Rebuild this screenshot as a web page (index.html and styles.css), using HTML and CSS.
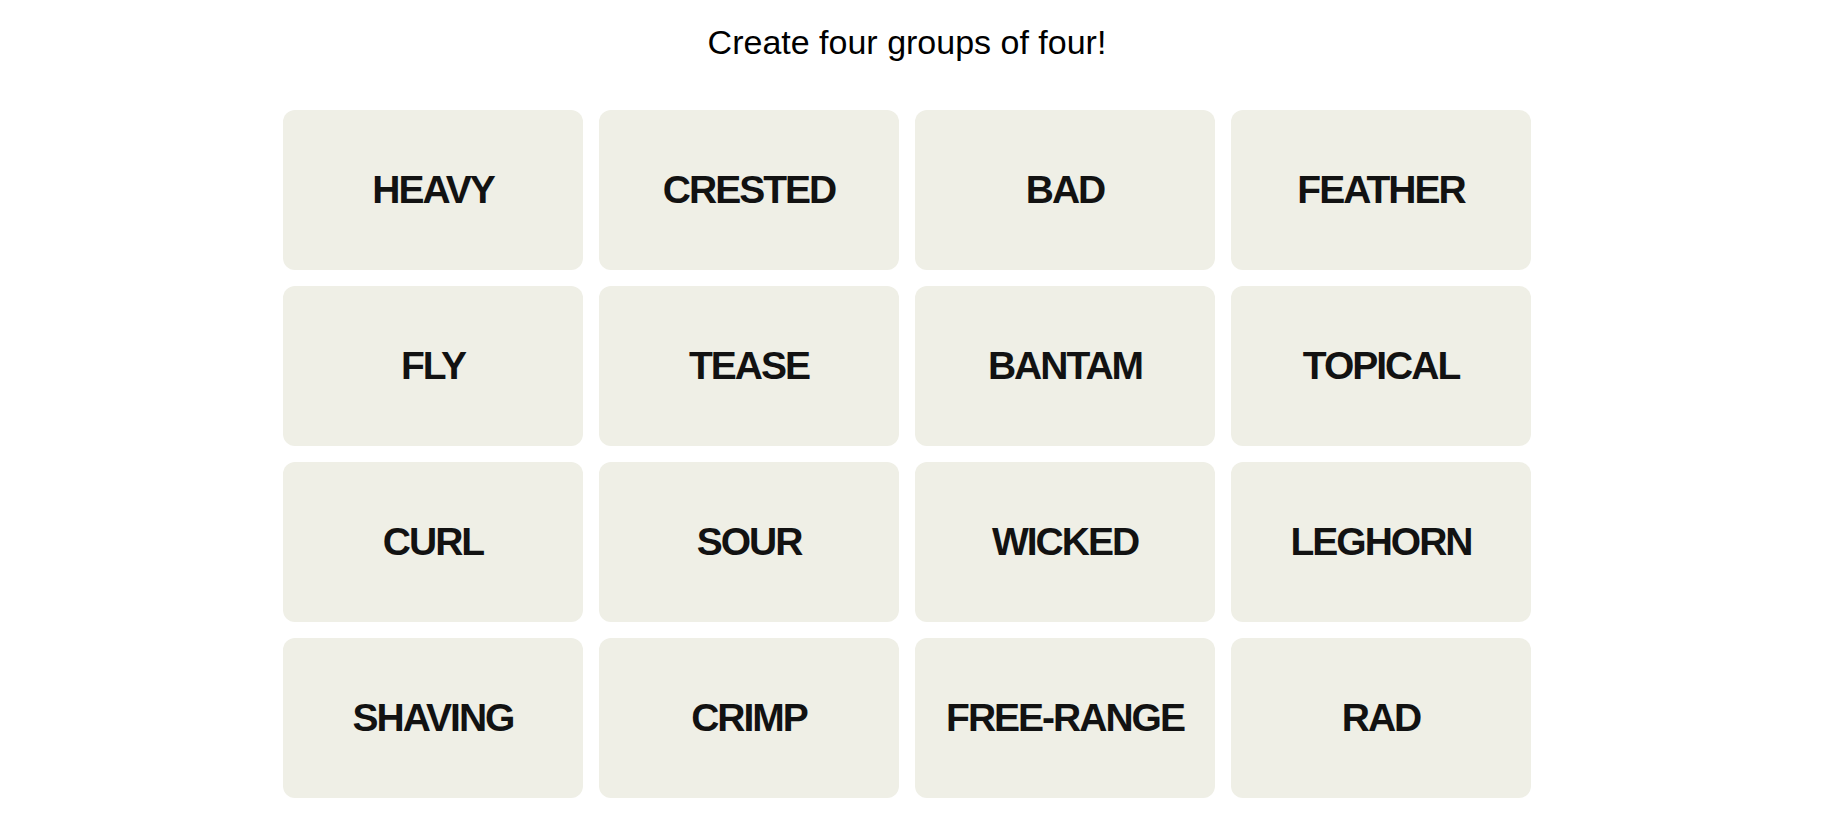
FILE: index.html
```html
<!DOCTYPE html>
<html lang="en">
<head>
<meta charset="utf-8">
<title>Connections</title>
<link rel="stylesheet" href="styles.css">
</head>
<body>
<main class="game">
  <p class="prompt">Create four groups of four!</p>
  <div class="board">
    <div class="tile">HEAVY</div>
    <div class="tile">CRESTED</div>
    <div class="tile">BAD</div>
    <div class="tile">FEATHER</div>
    <div class="tile">FLY</div>
    <div class="tile">TEASE</div>
    <div class="tile">BANTAM</div>
    <div class="tile">TOPICAL</div>
    <div class="tile">CURL</div>
    <div class="tile">SOUR</div>
    <div class="tile">WICKED</div>
    <div class="tile">LEGHORN</div>
    <div class="tile">SHAVING</div>
    <div class="tile">CRIMP</div>
    <div class="tile">FREE-RANGE</div>
    <div class="tile">RAD</div>
  </div>
</main>
</body>
</html>
```
FILE: styles.css
```css
html, body {
  margin: 0;
  padding: 0;
  background: #ffffff;
}

.game {
  display: flex;
  flex-direction: column;
  align-items: center;
  padding-right: 18px;
}

.prompt {
  margin: 19px 0 0;
  font-family: "Liberation Sans", Arial, sans-serif;
  font-size: 34px;
  line-height: 47px;
  color: #000;
}

.board {
  margin-top: 44px;
  display: grid;
  grid-template-columns: repeat(4, 300px);
  grid-auto-rows: 160px;
  gap: 16px;
}

.tile {
  display: flex;
  align-items: center;
  justify-content: center;
  background: #efefe6;
  border-radius: 12px;
  font-family: "Liberation Sans", Arial, sans-serif;
  font-weight: 700;
  font-size: 39px;
  letter-spacing: -2px;
  color: #121212;
}
```
